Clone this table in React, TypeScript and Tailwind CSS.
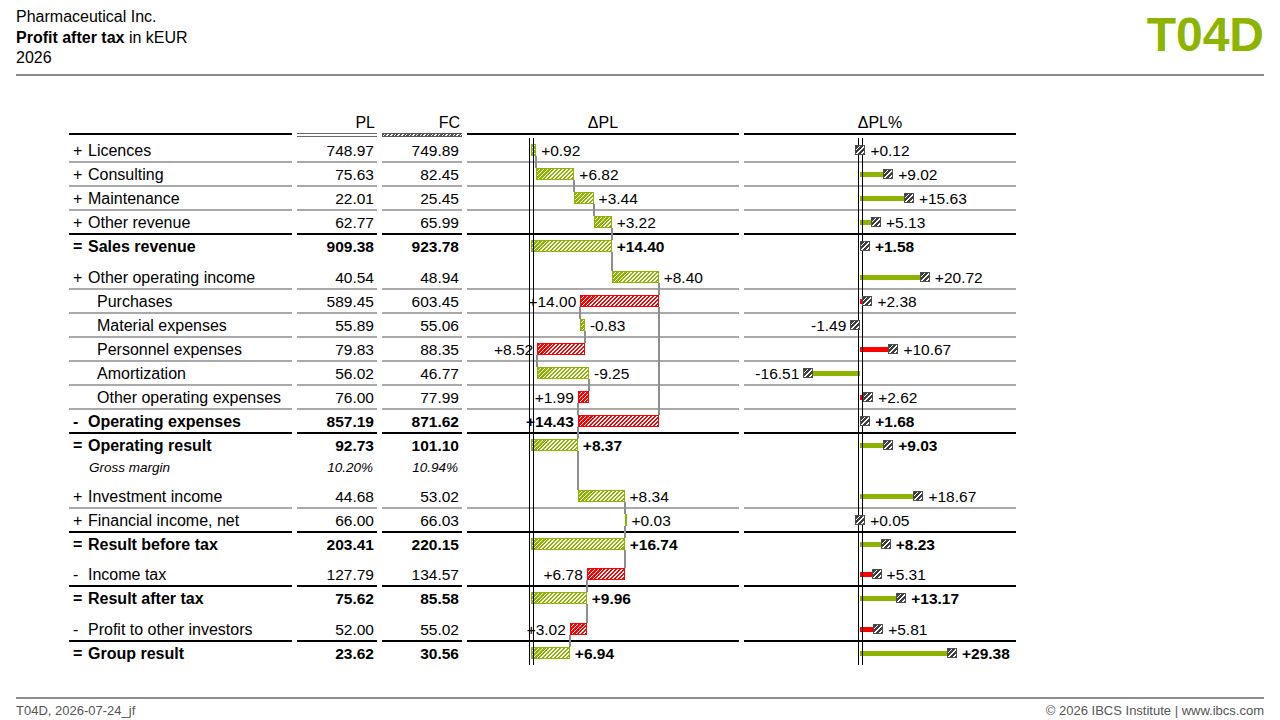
import React from 'react';

type Bar = { from: number; to: number; c: 'g' | 'r'; label: string; side: 'l' | 'r' };
type Pin = { v: number; c: 'g' | 'r'; label: string };
type Row = {
  sign?: string;
  label: string;
  pl: string;
  fc: string;
  bold?: boolean;
  indent?: boolean;
  pt?: string;
  line: 'gray' | 'black' | 'none';
  bar?: Bar;
  pin?: Pin;
  ins?: number[];
  outs?: number[];
  pass?: number[];
  first?: boolean;
  last?: boolean;
  gm?: boolean;
};

const rows: Row[] = [
  { sign: '+', label: 'Licences', pl: '748.97', fc: '749.89', pt: 'pt-[2px]', line: 'gray', bar: { from: 0, to: 0.92, c: 'g', label: '+0.92', side: 'r' }, pin: { v: 0.12, c: 'g', label: '+0.12' }, outs: [0.92], first: true },
  { sign: '+', label: 'Consulting', pl: '75.63', fc: '82.45', line: 'gray', bar: { from: 0.92, to: 7.74, c: 'g', label: '+6.82', side: 'r' }, pin: { v: 9.02, c: 'g', label: '+9.02' }, ins: [0.92], outs: [7.74] },
  { sign: '+', label: 'Maintenance', pl: '22.01', fc: '25.45', line: 'gray', bar: { from: 7.74, to: 11.18, c: 'g', label: '+3.44', side: 'r' }, pin: { v: 15.63, c: 'g', label: '+15.63' }, ins: [7.74], outs: [11.18] },
  { sign: '+', label: 'Other revenue', pl: '62.77', fc: '65.99', line: 'black', bar: { from: 11.18, to: 14.4, c: 'g', label: '+3.22', side: 'r' }, pin: { v: 5.13, c: 'g', label: '+5.13' }, ins: [11.18], outs: [14.4] },
  { sign: '=', label: 'Sales revenue', pl: '909.38', fc: '923.78', bold: true, line: 'none', bar: { from: 0, to: 14.4, c: 'g', label: '+14.40', side: 'r' }, pin: { v: 1.58, c: 'g', label: '+1.58' }, ins: [14.4], outs: [14.4] },
  { sign: '+', label: 'Other operating income', pl: '40.54', fc: '48.94', pt: 'pt-[7px]', line: 'gray', bar: { from: 14.4, to: 22.8, c: 'g', label: '+8.40', side: 'r' }, pin: { v: 20.72, c: 'g', label: '+20.72' }, ins: [14.4], outs: [22.8] },
  { label: 'Purchases', indent: true, pl: '589.45', fc: '603.45', line: 'gray', bar: { from: 8.8, to: 22.8, c: 'r', label: '+14.00', side: 'l' }, pin: { v: 2.38, c: 'r', label: '+2.38' }, ins: [22.8], outs: [8.8, 22.8] },
  { label: 'Material expenses', indent: true, pl: '55.89', fc: '55.06', line: 'gray', bar: { from: 8.8, to: 9.63, c: 'g', label: '-0.83', side: 'r' }, pin: { v: -1.49, c: 'g', label: '-1.49' }, ins: [8.8], outs: [9.63], pass: [22.8] },
  { label: 'Personnel expenses', indent: true, pl: '79.83', fc: '88.35', line: 'gray', bar: { from: 1.11, to: 9.63, c: 'r', label: '+8.52', side: 'l' }, pin: { v: 10.67, c: 'r', label: '+10.67' }, ins: [9.63], outs: [1.11], pass: [22.8] },
  { label: 'Amortization', indent: true, pl: '56.02', fc: '46.77', line: 'gray', bar: { from: 1.11, to: 10.36, c: 'g', label: '-9.25', side: 'r' }, pin: { v: -16.51, c: 'g', label: '-16.51' }, ins: [1.11], outs: [10.36], pass: [22.8] },
  { label: 'Other operating expenses', indent: true, pl: '76.00', fc: '77.99', line: 'gray', bar: { from: 8.37, to: 10.36, c: 'r', label: '+1.99', side: 'l' }, pin: { v: 2.62, c: 'r', label: '+2.62' }, ins: [10.36], outs: [8.37], pass: [22.8] },
  { sign: '-', label: 'Operating expenses', pl: '857.19', fc: '871.62', bold: true, line: 'black', bar: { from: 8.37, to: 22.8, c: 'r', label: '+14.43', side: 'l' }, pin: { v: 1.68, c: 'r', label: '+1.68' }, ins: [8.37, 22.8], outs: [8.37] },
  { sign: '=', label: 'Operating result', pl: '92.73', fc: '101.10', bold: true, line: 'none', bar: { from: 0, to: 8.37, c: 'g', label: '+8.37', side: 'r' }, pin: { v: 9.03, c: 'g', label: '+9.03' }, ins: [8.37], outs: [8.37] },
  { label: 'Gross margin', pl: '10.20%', fc: '10.94%', line: 'none', gm: true, pass: [8.37] },
  { sign: '+', label: 'Investment income', pl: '44.68', fc: '53.02', pt: 'pt-[9px]', line: 'gray', bar: { from: 8.37, to: 16.71, c: 'g', label: '+8.34', side: 'r' }, pin: { v: 18.67, c: 'g', label: '+18.67' }, ins: [8.37], outs: [16.71] },
  { sign: '+', label: 'Financial income, net', pl: '66.00', fc: '66.03', line: 'black', bar: { from: 16.71, to: 16.74, c: 'g', label: '+0.03', side: 'r' }, pin: { v: 0.05, c: 'g', label: '+0.05' }, ins: [16.71], outs: [16.74] },
  { sign: '=', label: 'Result before tax', pl: '203.41', fc: '220.15', bold: true, line: 'none', bar: { from: 0, to: 16.74, c: 'g', label: '+16.74', side: 'r' }, pin: { v: 8.23, c: 'g', label: '+8.23' }, ins: [16.74], outs: [16.74] },
  { sign: '-', label: 'Income tax', pl: '127.79', fc: '134.57', pt: 'pt-[6px]', line: 'black', bar: { from: 9.96, to: 16.74, c: 'r', label: '+6.78', side: 'l' }, pin: { v: 5.31, c: 'r', label: '+5.31' }, ins: [16.74], outs: [9.96] },
  { sign: '=', label: 'Result after tax', pl: '75.62', fc: '85.58', bold: true, line: 'none', bar: { from: 0, to: 9.96, c: 'g', label: '+9.96', side: 'r' }, pin: { v: 13.17, c: 'g', label: '+13.17' }, ins: [9.96], outs: [9.96] },
  { sign: '-', label: 'Profit to other investors', pl: '52.00', fc: '55.02', pt: 'pt-[7px]', line: 'black', bar: { from: 6.94, to: 9.96, c: 'r', label: '+3.02', side: 'l' }, pin: { v: 5.81, c: 'r', label: '+5.81' }, ins: [9.96], outs: [6.94] },
  { sign: '=', label: 'Group result', pl: '23.62', fc: '30.56', bold: true, line: 'none', bar: { from: 0, to: 6.94, c: 'g', label: '+6.94', side: 'r' }, pin: { v: 29.38, c: 'g', label: '+29.38' }, ins: [6.94], last: true },
];

const AX1 = 64;
const S1 = 5.6;
const AX2 = 116;
const S2 = 3.13;
const x1 = (v: number) => AX1 + v * S1;
const x2 = (v: number) => AX2 + v * S2;

const lineCls = (l: Row['line']) =>
  l === 'gray' ? 'border-[#a9a9a9]' : l === 'black' ? 'border-black' : 'border-transparent';

const hatchG =
  'border-[1.5px] border-[#8cb400] bg-[repeating-linear-gradient(135deg,#8cb400_0px,#8cb400_1.5px,#ffffff_1.5px,#ffffff_2.8px)]';
const hatchR =
  'border-[1.5px] border-[#ff0000] bg-[repeating-linear-gradient(135deg,#ff0000_0px,#ff0000_1.5px,#ffffff_1.5px,#ffffff_2.8px)]';
const marker =
  'border border-[#4d4d4d] bg-[repeating-linear-gradient(135deg,#3d3d3d_0px,#3d3d3d_2.2px,#ffffff_2.2px,#ffffff_3.4px)]';

function Axis({ left, r }: { left: string; r: Row }) {
  return (
    <div
      className={`absolute ${left} w-[5px] border-x-[1.5px] border-black z-10 ${r.first ? 'top-[1px]' : 'top-[-2px]'} ${r.last ? 'bottom-[-1px]' : r.gm ? 'bottom-0' : 'bottom-[-2px]'}`}
    />
  );
}

function DeltaCell({ r }: { r: Row }) {
  const b = r.bar;
  const lo = b ? Math.min(b.from, b.to) : 0;
  const hi = b ? Math.max(b.from, b.to) : 0;
  const left = x1(lo);
  const tiny = (hi - lo) * S1 < 3;
  const width = Math.max(2, (hi - lo) * S1);
  return (
    <div className={`relative ${r.gm ? 'h-[18px]' : `border-b-2 ${lineCls(r.line)}`}`}>
      <Axis left="left-[61.5px]" r={r} />
      {(r.pass || []).map((v, i) => (
        <div key={'p' + i} className={`absolute w-[2px] bg-[#8e8e8e] top-[-2px] ${r.gm ? 'bottom-0' : 'bottom-[-2px]'}`} style={{ left: x1(v) - 1 }} />
      ))}
      {(r.ins || []).map((v, i) => (
        <div key={'i' + i} className="absolute w-[2px] bg-[#8e8e8e] top-[-2px] bottom-[17px]" style={{ left: x1(v) - 1 }} />
      ))}
      {(r.outs || []).map((v, i) => (
        <div key={'o' + i} className="absolute w-[2px] bg-[#8e8e8e] bottom-[-2px] h-[7px]" style={{ left: x1(v) - 1 }} />
      ))}
      {b && (
        <>
          <div
            className={`absolute bottom-[5px] h-[12px] ${tiny ? (b.c === 'g' ? 'bg-[#8cb400]' : 'bg-[#ff0000]') : b.c === 'g' ? hatchG : hatchR}`}
            style={{ left, width }}
          />
          <div
            className={`absolute bottom-0 h-[22px] pt-[2px] leading-[20px] whitespace-nowrap text-[15.5px] z-20 ${r.bold ? 'font-bold' : ''} ${b.side === 'l' ? '-translate-x-full' : ''}`}
            style={{ left: b.side === 'l' ? left - 4 : left + width + 5 }}
          >
            {b.label}
          </div>
        </>
      )}
    </div>
  );
}

function PctCell({ r }: { r: Row }) {
  const p = r.pin;
  return (
    <div className={`relative ${r.gm ? 'h-[18px]' : `border-b-2 ${lineCls(r.line)}`}`}>
      <Axis left="left-[113.5px]" r={r} />
      {p && (
        <>
          <div
            className={`absolute bottom-[8.5px] h-[5px] ${p.c === 'g' ? 'bg-[#8cb400]' : 'bg-[#ff0000]'}`}
            style={{ left: Math.min(AX2, x2(p.v)), width: Math.abs(p.v) * S2 }}
          />
          <div className={`absolute bottom-[6px] w-[10px] h-[10px] z-20 ${marker}`} style={{ left: x2(p.v) - 5 }} />
          <div
            className={`absolute bottom-0 h-[22px] pt-[2px] leading-[20px] whitespace-nowrap text-[15.5px] ${r.bold ? 'font-bold' : ''} ${p.v < 0 ? '-translate-x-full' : ''}`}
            style={{ left: p.v < 0 ? x2(p.v) - 9 : x2(p.v) + 10 }}
          >
            {p.label}
          </div>
        </>
      )}
    </div>
  );
}

function DataRow({ r }: { r: Row }) {
  if (r.gm) {
    return (
      <>
        <div className="h-[18px] pt-[1px] leading-[17px] pl-[20px] italic text-[13.5px]">{r.label}</div>
        <div className="h-[18px] pt-[1px] leading-[17px] pr-[4px] text-right italic text-[13.5px]">{r.pl}</div>
        <div className="h-[18px] pt-[1px] leading-[17px] pr-[4px] text-right italic text-[13.5px]">{r.fc}</div>
        <DeltaCell r={r} />
        <PctCell r={r} />
      </>
    );
  }
  const base = `border-b-2 ${lineCls(r.line)} ${r.pt || ''} ${r.bold ? 'font-bold' : ''}`;
  return (
    <>
      <div className={`${base} pl-[4px] text-[16px] whitespace-nowrap`}>
        <div className="flex h-[22px] pt-[2px] leading-[20px]">
          <span className="w-[15px] shrink-0">{r.sign || ''}</span>
          <span className={r.indent ? 'ml-[9px]' : ''}>{r.label}</span>
        </div>
      </div>
      <div className={`${base} text-right pr-[3px] text-[15.5px]`}>
        <div className="h-[22px] pt-[2px] leading-[20px]">{r.pl}</div>
      </div>
      <div className={`${base} text-right pr-[3px] text-[15.5px]`}>
        <div className="h-[22px] pt-[2px] leading-[20px]">{r.fc}</div>
      </div>
      <DeltaCell r={r} />
      <PctCell r={r} />
    </>
  );
}

export default function App() {
  return (
    <div className="w-[1280px] h-[720px] bg-white flex flex-col font-['Liberation_Sans',Arial,sans-serif] text-black overflow-hidden">
      <div className="flex justify-between px-[16px]">
        <div className="pt-[7px] text-[16px] leading-[20.5px]">
          <div>Pharmaceutical Inc.</div>
          <div>
            <span className="font-bold">Profit after tax</span> in kEUR
          </div>
          <div>2026</div>
        </div>
        <div className="mt-[11px] text-[48px] leading-[48px] font-bold text-[#8cb400]">T04D</div>
      </div>
      <div className="mx-[16px] mt-[5.5px] h-[2px] bg-[#8c8c8c]" />

      <div className="mt-[35px] ml-[69px] grid grid-cols-[223px_80px_80px_272px_272px] gap-x-[5px]">
        <div className="flex flex-col justify-end">
          <div className="h-[2px] bg-black mb-[2px]" />
        </div>
        <div className="flex flex-col">
          <div className="h-[22px] pt-[2px] leading-[20px] text-right pr-[2px] text-[16px]">PL</div>
          <div className="h-[4px] border-y-[1.5px] border-[#6a6a6a]" />
        </div>
        <div className="flex flex-col">
          <div className="h-[22px] pt-[2px] leading-[20px] text-right pr-[2px] text-[16px]">FC</div>
          <div className="h-[4px] bg-[repeating-linear-gradient(135deg,#555555_0px,#555555_1.6px,#ffffff_1.6px,#ffffff_2.6px)] border-y border-[#555555]" />
        </div>
        <div className="flex flex-col">
          <div className="h-[22px] pt-[2px] leading-[20px] text-center text-[16px]">ΔPL</div>
          <div className="h-[2px] bg-black mb-[2px]" />
        </div>
        <div className="flex flex-col">
          <div className="h-[22px] pt-[2px] leading-[20px] text-center text-[16px]">ΔPL%</div>
          <div className="h-[2px] bg-black mb-[2px]" />
        </div>

        {rows.map((r, i) => (
          <DataRow key={i} r={r} />
        ))}
      </div>

      <div className="mt-auto pb-[1px]">
        <div className="mx-[16px] h-[2px] bg-[#8c8c8c]" />
        <div className="flex justify-between px-[16px] pt-[4px] text-[13px] leading-[16px] text-[#555555]">
          <span>T04D, 2026-07-24_jf</span>
          <span>© 2026 IBCS Institute | www.ibcs.com</span>
        </div>
      </div>
    </div>
  );
}
